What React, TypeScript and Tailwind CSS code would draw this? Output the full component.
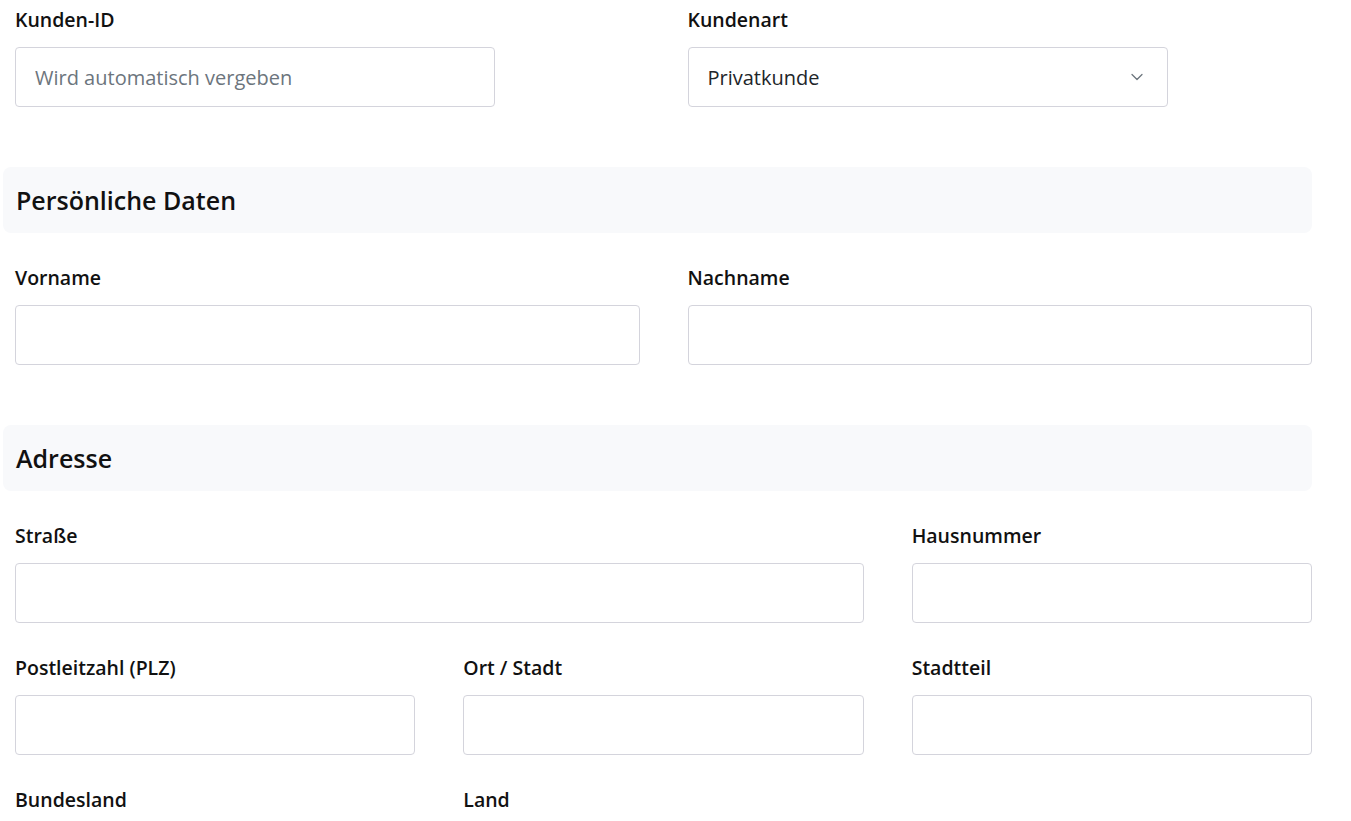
import { ChevronDown } from "lucide-react";

const font = { fontFamily: '"Open Sans", "Noto Sans", sans-serif' };

function Label({ children }: { children: React.ReactNode }) {
  return (
    <label className="block text-[19.5px] leading-[27px] font-semibold text-[#111] mb-[14px]">
      {children}
    </label>
  );
}

function Field({ label, placeholder, className = "" }: { label: string; placeholder?: string; className?: string }) {
  return (
    <div className={className}>
      <Label>{label}</Label>
      <input
        type="text"
        placeholder={placeholder}
        className="block w-full h-[60px] px-[19px] text-[20px] text-[#212529] placeholder:text-[#6c757d] bg-white border border-[#d4d4dc] rounded-[4px] outline-none"
      />
    </div>
  );
}

function SectionHeader({ title }: { title: string }) {
  return (
    <div className="-ml-3 h-[66px] flex items-center px-[13px] bg-[#f8f9fb] rounded-lg">
      <h3 className="text-[25px] font-semibold text-[#111] pt-px">{title}</h3>
    </div>
  );
}

export default function App() {
  return (
    <div className="min-h-screen bg-white" style={font}>
      <div className="w-[1297px] ml-[15px] pt-[6px]">
        {/* Kopfzeile */}
        <div className="grid grid-cols-2 gap-x-12">
          <Field label="Kunden-ID" placeholder="Wird automatisch vergeben" className="w-[480px]" />
          <div className="w-[480px]">
            <Label>Kundenart</Label>
            <div className="relative">
              <select className="block w-full h-[60px] pl-[19px] pr-10 pt-px text-[20px] text-[#212529] bg-white border border-[#d4d4dc] rounded-[4px] appearance-none outline-none">
                <option>Privatkunde</option>
                <option>Geschäftskunde</option>
              </select>
              <ChevronDown
                size={20}
                strokeWidth={1.5}
                className="absolute right-[21px] top-1/2 -translate-y-1/2 text-[#6c757d] pointer-events-none"
              />
            </div>
          </div>
        </div>

        <div className="mt-[60px]">
          <SectionHeader title="Persönliche Daten" />
        </div>
        <div className="grid grid-cols-2 gap-x-12 mt-[31px]">
          <Field label="Vorname" />
          <Field label="Nachname" />
        </div>

        <div className="mt-[60px]">
          <SectionHeader title="Adresse" />
        </div>
        <div className="grid grid-cols-3 gap-x-12 gap-y-[31px] mt-[31px] pb-10">
          <Field label="Straße" className="col-span-2" />
          <Field label="Hausnummer" />
          <Field label="Postleitzahl (PLZ)" />
          <Field label="Ort / Stadt" />
          <Field label="Stadtteil" />
          <Field label="Bundesland" />
          <Field label="Land" />
        </div>
      </div>
    </div>
  );
}
